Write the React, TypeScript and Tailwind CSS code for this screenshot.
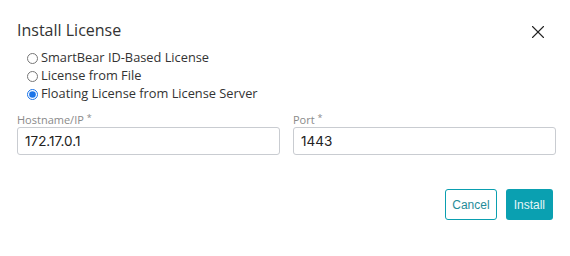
import { X } from 'lucide-react';

const options = [
  'SmartBear ID-Based License',
  'License from File',
  'Floating License from License Server',
];

function Field({ label, value }: { label: string; value: string }) {
  return (
    <div className="flex flex-col">
      <span className="text-[11px] leading-[13px] text-[#8a8a8a]">
        {label} <span className="relative -top-[3px] text-[9px]">*</span>
      </span>
      <input
        readOnly
        value={value}
        className="mt-0 h-[28px] rounded-[3px] border border-[#c9ccd1] px-[7px] text-[13.5px] text-[#222] outline-none font-['Inter',sans-serif]"
      />
    </div>
  );
}

export default function App() {
  return (
    <div className="w-[570px] h-[256px] bg-white font-['Open_Sans',sans-serif] text-[#333]">
      <div className="flex items-start justify-between pl-[17px] pr-[21px] pt-[17px]">
        <h1 className="text-[16px] leading-[26px] text-[#333]">Install License</h1>
        <button className="mt-[4px] text-[#222]">
          <X size={22} strokeWidth={1.2} />
        </button>
      </div>

      <div className="mt-[6px] flex flex-col pl-[27px]">
        {options.map((opt, i) => (
          <label key={opt} className="flex h-[18px] items-center gap-[3px] text-[12.8px] text-[#333]">
            <input
              type="radio"
              name="license"
              defaultChecked={i === 2}
              className="m-0 h-[11px] w-[11px] accent-[#1a73e8]"
            />
            {opt}
          </label>
        ))}
      </div>

      <div className="mt-[10px] grid grid-cols-2 gap-[13px] pl-[17px] pr-[14px]">
        <Field label="Hostname/IP" value="172.17.0.1" />
        <Field label="Port" value="1443" />
      </div>

      <div className="mt-[34px] flex justify-end gap-[9px] pr-[17px] font-['Liberation_Sans',sans-serif] text-[12px]">
        <button className="h-[31px] rounded-[3px] border border-[#0a9fb0] bg-white px-[6px] text-[#1f8c99]">
          Cancel
        </button>
        <button className="h-[31px] rounded-[3px] bg-[#0aa0b1] px-[8px] text-[#e6f6f8]">
          Install
        </button>
      </div>
    </div>
  );
}
